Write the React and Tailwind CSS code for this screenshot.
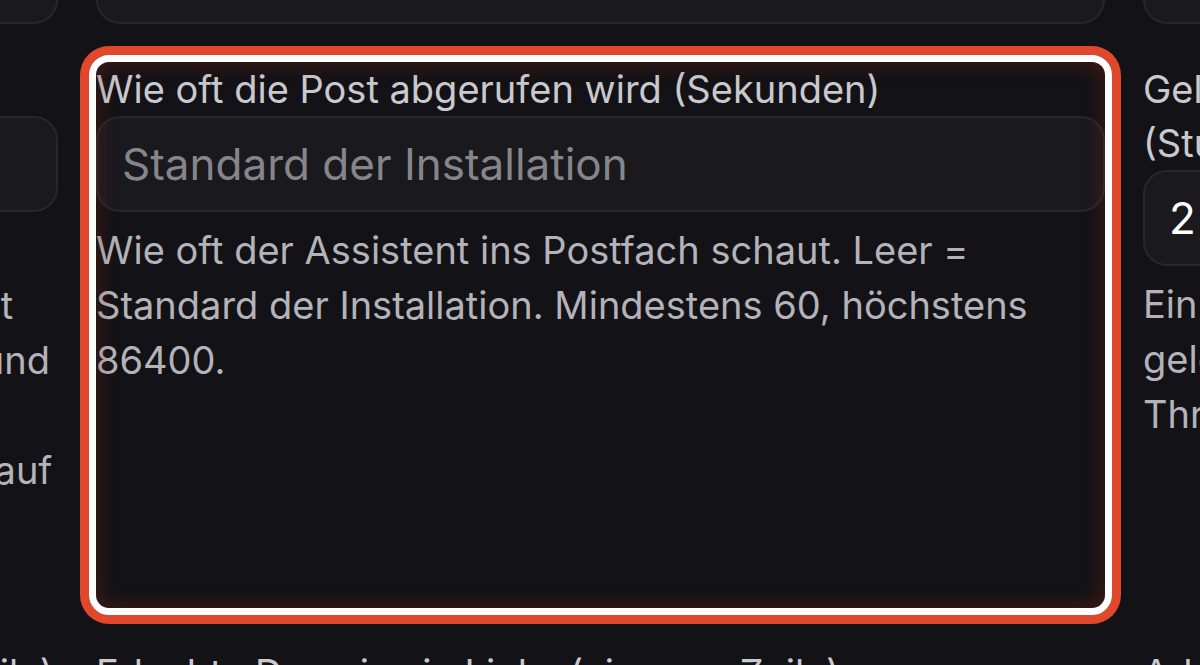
const Input = ({ placeholder, value }) => (
  <div className="h-[96px] rounded-[24px] border-2 border-[#28272d] bg-[#1a191e] px-[24px] flex items-center text-[44px] whitespace-nowrap overflow-hidden">
    {value ? (
      <span className="text-white">{value}</span>
    ) : (
      <span className="text-[#86858c]">{placeholder}</span>
    )}
  </div>
);

const Field = ({ label, placeholder, value, help, highlight }) => (
  <div className="relative flex flex-col">
    <label className="text-[38px] leading-[54px] text-[#c9c9ce] whitespace-nowrap">{label}</label>
    <Input placeholder={placeholder} value={value} />
    {help && (
      <p className="mt-[11px] text-[38px] leading-[55px] text-[#b3b3b9] whitespace-nowrap">{help}</p>
    )}
    {highlight && (
      <div className="pointer-events-none absolute -inset-[7px] rounded-[20px] border-[7px] border-white shadow-[0_0_0_9px_#e0472b,inset_0_0_22px_0_rgba(140,40,22,0.45)]" />
    )}
  </div>
);

const Label = ({ children }) => (
  <span className="text-[38px] leading-[54px] text-[#c9c9ce] whitespace-nowrap">{children}</span>
);

export default function App() {
  return (
    <div className="h-[665px] w-[1200px] overflow-hidden bg-[#131216] font-['Inter',sans-serif]">
      <div className="-mt-[72px] -ml-[951px] grid grid-cols-[1009px_1009px_1009px] gap-x-[38px] gap-y-[38px]">
        <Input placeholder="" />
        <Input placeholder="" />
        <Input placeholder="" />

        <Field
          label="Überwachte Ordner"
          placeholder=""
          help={
            <>
              Welche Ordner beim Abrufen gelesen werden.
              <br />
              Leer = Posteingang. Mehrere Ordner werden getrennt
              <br />
              durch Kommas angegeben. Unterordner fehlen hier und
              <br />
              müssen einzeln eingetragen werden.
              <br />
              Groß- und Kleinschreibung zählt, achten Sie penibel auf
              <br />
              die Schreibweise des Servers.
              <br />
              Beispiel: INBOX, Support
            </>
          }
        />

        <Field
          highlight
          label="Wie oft die Post abgerufen wird (Sekunden)"
          placeholder="Standard der Installation"
          help={
            <>
              Wie oft der Assistent ins Postfach schaut. Leer =
              <br />
              Standard der Installation. Mindestens 60, höchstens
              <br />
              86400.
            </>
          }
        />

        <Field
          label={
            <>
              Gelesene Threads schließen nach
              <br />
              (Stunden)
            </>
          }
          value="2"
          help={
            <>
              Ein Thread ohne neue Antwort wird danach als
              <br />
              gelesen markiert und geschlossen.
              <br />
              Threads werden nicht erneut beantwortet.
            </>
          }
        />

        <Label>Ausgenommene Absender und Domains (eine pro Zeile)</Label>
        <Label>Erlaubte Domains in Links (eine pro Zeile)</Label>
        <Label>Adressen für Benachrichtigungen</Label>
      </div>
    </div>
  );
}
